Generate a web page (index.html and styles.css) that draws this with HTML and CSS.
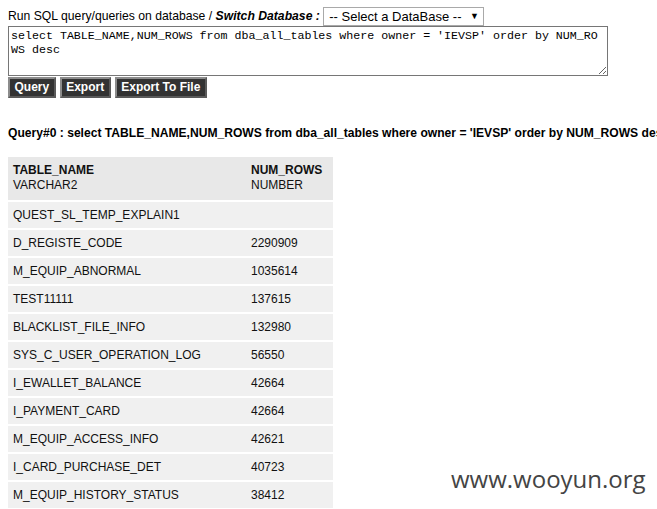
FILE: index.html
```html
<!DOCTYPE html>
<html>
<head>
<meta charset="utf-8">
<link rel="stylesheet" href="styles.css">
</head>
<body>
<form class="qform">
  <div class="topline">Run SQL query/queries on database / <b><i>Switch Database :</i></b>
    <span class="select">-- Select a DataBase -- <span class="arrow">&#9660;</span></span>
  </div>
  <textarea class="sql">select TABLE_NAME,NUM_ROWS from dba_all_tables where owner = 'IEVSP' order by NUM_ROWS desc</textarea>
  <div class="buttons">
    <button type="button" class="btn">Query</button>
    <button type="button" class="btn">Export</button>
    <button type="button" class="btn">Export To File</button>
  </div>
</form>
<div class="qtitle">Query#0 : select TABLE_NAME,NUM_ROWS from dba_all_tables where owner = 'IEVSP' order by NUM_ROWS desc</div>
<table class="result">
  <thead>
    <tr><th class="c1"><b>TABLE_NAME</b><br>VARCHAR2</th><th class="c2"><b>NUM_ROWS</b><br>NUMBER</th></tr>
  </thead>
  <tbody>
    <tr><td>QUEST_SL_TEMP_EXPLAIN1</td><td></td></tr>
    <tr><td>D_REGISTE_CODE</td><td>2290909</td></tr>
    <tr><td>M_EQUIP_ABNORMAL</td><td>1035614</td></tr>
    <tr><td>TEST11111</td><td>137615</td></tr>
    <tr><td>BLACKLIST_FILE_INFO</td><td>132980</td></tr>
    <tr><td>SYS_C_USER_OPERATION_LOG</td><td>56550</td></tr>
    <tr><td>I_EWALLET_BALANCE</td><td>42664</td></tr>
    <tr><td>I_PAYMENT_CARD</td><td>42664</td></tr>
    <tr><td>M_EQUIP_ACCESS_INFO</td><td>42621</td></tr>
    <tr><td>I_CARD_PURCHASE_DET</td><td>40723</td></tr>
    <tr><td>M_EQUIP_HISTORY_STATUS</td><td>38412</td></tr>
  </tbody>
</table>
<div class="watermark">www.wooyun.org</div>
</body>
</html>
```
FILE: styles.css
```css
html, body {
  margin: 0;
  padding: 0;
  background: #fff;
  overflow: hidden;
}
body {
  padding: 7px 8px 0 8px;
  font-family: "Liberation Sans", Arial, sans-serif;
  font-size: 12px;
  color: #000;
  width: 900px;
}
.qform {
  margin: 0;
}
.topline {
  height: 19px;
  line-height: 19px;
  white-space: nowrap;
  font-size: 12.2px;
}
.select {
  display: inline-block;
  box-sizing: border-box;
  width: 161px;
  height: 19px;
  line-height: 17px;
  border: 1px solid #a9a9a9;
  padding-left: 5px;
  font-size: 13px;
  color: #000;
  vertical-align: top;
}
.arrow {
  font-size: 9px;
  margin-left: 5px;
  vertical-align: top;
}
.sql {
  display: block;
  box-sizing: border-box;
  width: 600px;
  height: 50px;
  margin: 0;
  padding: 2px 4px 2px 2px;
  border: 1px solid #767676;
  font-family: "Liberation Mono", "Courier New", monospace;
  font-size: 11.65px;
  line-height: 14px;
  color: #000;
  resize: both;
  overflow: hidden;
  word-break: break-all;
}
.buttons {
  display: flex;
  gap: 4px;
  margin-top: 1px;
}
.btn {
  box-sizing: border-box;
  height: 21px;
  margin: 0;
  padding: 0 4.5px;
  background: #333;
  color: #fff;
  font-family: "Liberation Sans", Arial, sans-serif;
  font-size: 12px;
  font-weight: bold;
  border: 2px solid #8c8c8c;
  border-right-color: #5a5a5a;
  border-bottom-color: #5a5a5a;
  line-height: 17px;
}
.qtitle {
  margin-top: 28px;
  font-size: 12.1px;
  font-weight: bold;
  white-space: nowrap;
  line-height: 14px;
}
.result {
  margin-top: 17px;
  border-collapse: collapse;
  width: 325px;
  font-size: 12px;
  color: #111;
}
.result th {
  text-align: left;
  font-weight: normal;
  background: #e8e8e8;
  padding: 6px 5px 7px 5px;
  height: 30px;
  line-height: 15px;
  vertical-align: top;
  border-bottom: 2px solid #fff;
}
.result th.c1 {
  width: 228px;
}
.result td {
  background: #f0f0f0;
  padding: 0 5px;
  height: 26px;
  line-height: 14px;
  border-bottom: 2px solid #fff;
}
.watermark {
  position: absolute;
  left: 451px;
  top: 462px;
  font-family: "Open Sans", "DejaVu Sans", sans-serif;
  font-size: 24px;
  color: #444;
}
```
